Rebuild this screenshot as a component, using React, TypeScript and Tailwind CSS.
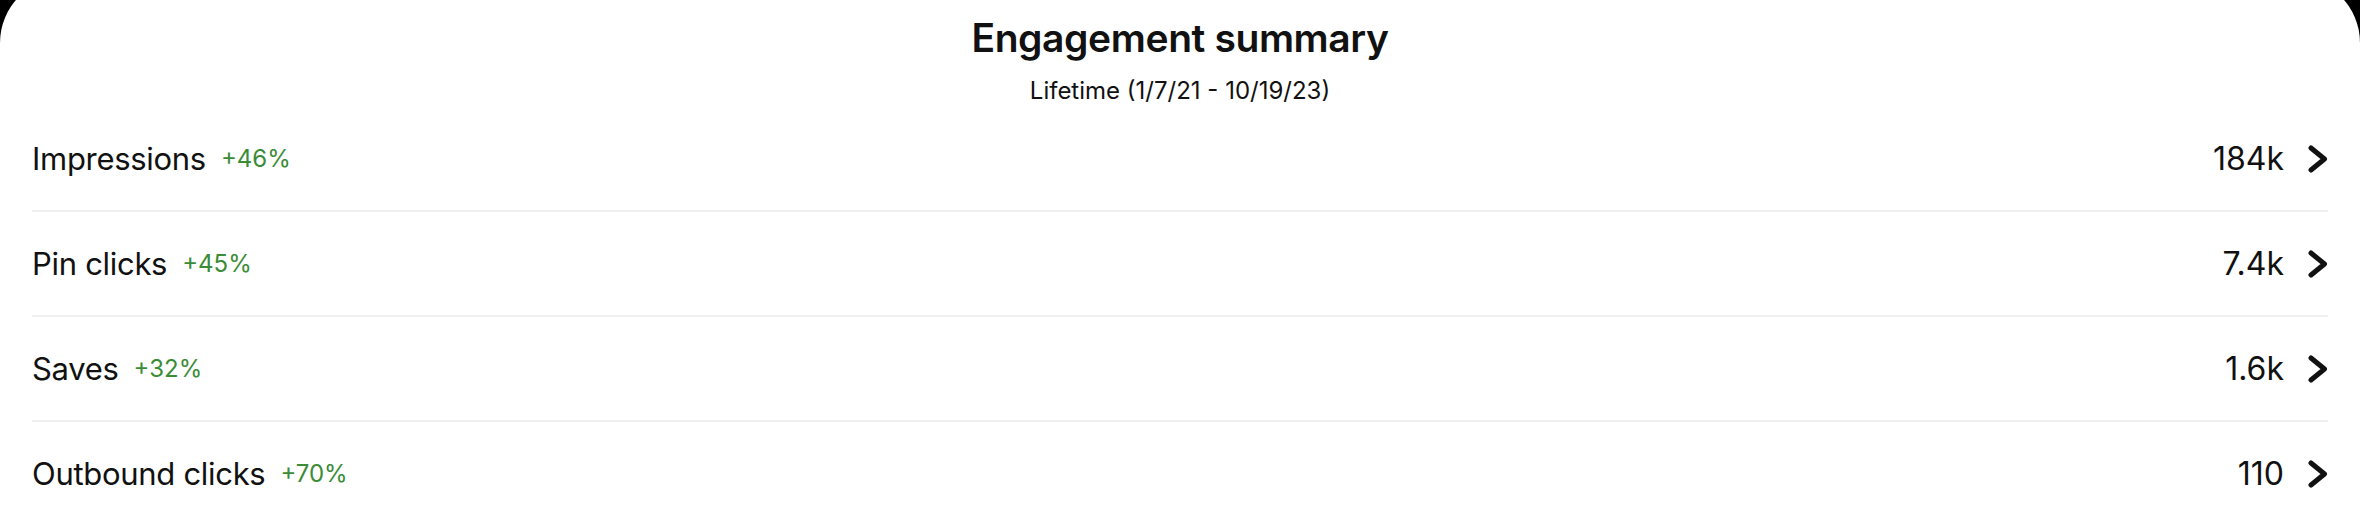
import React from "react";

const rows = [
  { label: "Impressions", pct: "+46%", value: "184k" },
  { label: "Pin clicks", pct: "+45%", value: "7.4k" },
  { label: "Saves", pct: "+32%", value: "1.6k" },
  { label: "Outbound clicks", pct: "+70%", value: "110" },
];

function Chevron() {
  return (
    <svg width="20" height="28" viewBox="0 0 20 28" fill="none" className="shrink-0">
      <path d="M3 3 L16.5 14 L3 25" stroke="#111111" strokeWidth="5" strokeLinecap="round" strokeLinejoin="round" />
    </svg>
  );
}

export default function App() {
  return (
    <div className="h-[526px] w-full bg-black overflow-hidden flex flex-col font-['Inter','Noto_Sans',sans-serif] text-[#111111]">
      <div className="-mt-[23px] pt-[23px] flex-1 bg-white rounded-t-[66px] flex flex-col">
        <div className="h-[107px] flex flex-col items-center pt-[15px]">
          <div className="text-[39px] leading-[46px] font-semibold tracking-[-0.4px]">Engagement summary</div>
          <div className="mt-[16px] text-[24px] leading-[28px]">Lifetime (1/7/21 - 10/19/23)</div>
        </div>
        <div className="flex flex-col mx-[32px]">
          {rows.map((r, i) => (
            <div
              key={r.label}
              className={
                i < rows.length - 1
                  ? "h-[105px] flex items-center border-b-2 border-[#efefef]"
                  : "h-[103px] flex items-center"
              }
            >
              <span className="text-[31px] leading-[40px] tracking-[-0.3px]">{r.label}</span>
              <span className="ml-[15px] text-[24px] leading-[28px] text-[#3a8c36]">{r.pct}</span>
              <span className="ml-auto text-[32px] leading-[40px]">{r.value}</span>
              <span className="ml-[24px] flex items-center">
                <Chevron />
              </span>
            </div>
          ))}
        </div>
      </div>
    </div>
  );
}
